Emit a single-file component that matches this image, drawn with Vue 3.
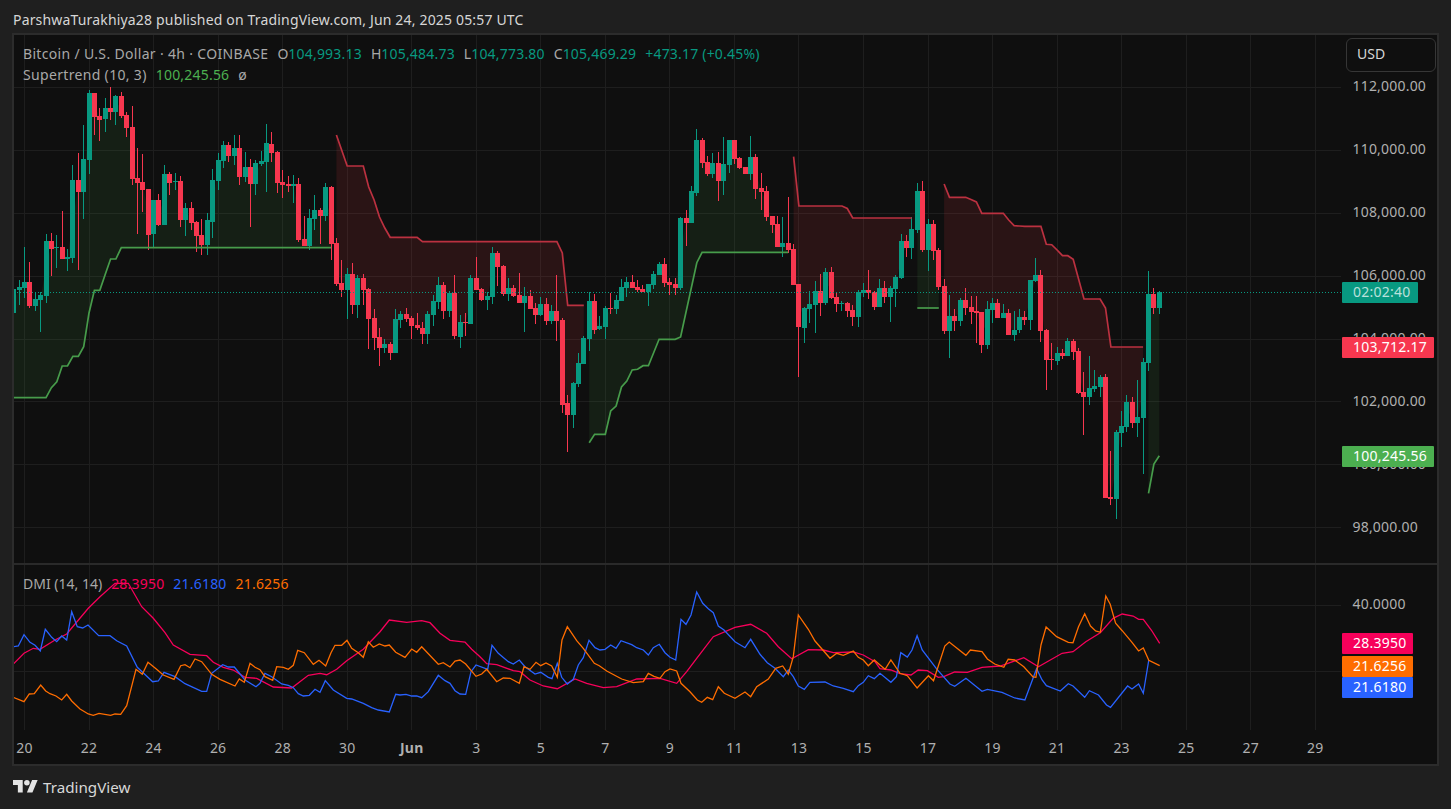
<script setup>
// chart data is kept in page pixels, as read from the picture
const BAR0_X = 13.75;
const BAR_STEP = 5.378;
const barX = (i) => BAR0_X + BAR_STEP * i;

// [bodyTop, bodyBottom, wickTop, wickBottom, up]
const candles = [
  [289,313,287,322,1],[287,290,280,305,1],[282,288,247,298,1],[282,306,262,308,0],[299,306,292,311,1],
  [295,300,292,332,1],[241,296,234,303,1],[241,249,233,276,0],[247,248,235,268,1],[247,259,211,259,0],
  [257,259,249,271,1],[180,258,165,263,1],[180,192,153,270,0],[159,192,125,219,1],[93,160,90,174,1],
  [93,117,93,135,0],[116,120,108,141,0],[108,119,98,132,1],[108,112,87,120,0],[96,112,95,125,1],
  [96,116,92,118,0],[115,128,112,137,0],[127,179,106,185,0],[178,183,148,234,0],[182,190,154,212,0],
  [189,235,189,250,0],[200,234,200,248,1],[200,225,194,226,0],[174,225,165,225,1],[174,183,172,195,0],
  [181,182,173,190,1],[181,220,176,227,0],[208,220,203,236,1],[208,223,202,230,0],[222,236,221,252,0],
  [235,245,219,255,0],[220,245,213,255,1],[180,222,169,238,1],[160,181,153,190,1],[145,161,141,168,1],
  [145,156,142,162,0],[148,156,135,165,1],[148,177,135,185,0],[167,177,152,182,1],[167,184,159,227,0],
  [163,184,160,195,1],[161,164,151,166,1],[143,162,124,192,1],[144,153,132,162,0],[152,183,151,193,0],
  [182,185,170,198,0],[184,186,176,192,0],[184,186,175,203,1],[184,240,178,242,0],[239,246,216,246,0],
  [218,246,209,250,1],[210,219,195,230,1],[210,216,208,244,0],[187,216,183,221,1],[187,244,186,260,0],
  [243,284,238,286,0],[283,290,260,297,0],[274,290,268,319,1],[274,305,263,314,0],[278,305,275,318,1],
  [278,290,274,305,0],[289,319,288,349,0],[318,338,309,350,0],[337,348,328,366,0],[344,348,339,353,1],
  [344,353,342,360,0],[319,353,309,353,1],[314,320,311,328,1],[314,319,308,322,0],[318,326,316,339,0],
  [325,328,313,330,0],[328,334,322,344,0],[314,334,311,344,1],[301,315,295,326,1],[285,302,277,309,1],
  [285,311,282,319,0],[293,311,291,317,1],[293,336,275,339,0],[322,337,315,348,1],[322,323,313,336,0],
  [278,324,275,324,1],[278,290,257,290,0],[289,300,288,301,0],[296,300,292,310,1],[253,297,247,304,1],
  [253,267,251,286,0],[266,294,265,296,0],[288,294,278,301,1],[288,296,285,297,0],[295,303,273,303,0],
  [296,303,287,332,1],[296,309,290,309,0],[308,315,303,324,0],[304,315,297,316,1],[304,321,298,325,0],
  [311,321,305,324,1],[311,321,275,341,0],[320,405,318,413,0],[403,415,395,452,0],[383,415,382,428,1],
  [363,384,353,387,1],[338,364,336,364,1],[301,339,292,351,1],[301,330,294,334,0],[326,329,316,330,1],
  [308,327,306,339,1],[308,309,293,314,0],[300,309,295,314,1],[287,301,279,301,1],[282,288,277,297,1],
  [282,288,275,288,0],[287,290,280,292,0],[289,292,285,292,0],[284,292,284,306,1],[274,285,271,289,1],
  [264,275,262,275,1],[264,283,258,287,0],[282,285,278,295,0],[284,288,278,295,0],[218,288,217,290,1],
  [218,223,210,246,0],[191,223,186,223,1],[140,193,129,196,1],[140,163,138,168,0],[162,174,156,176,0],
  [163,174,153,178,1],[163,181,152,201,0],[164,181,137,195,1],[140,165,140,173,1],[140,159,140,164,0],
  [158,168,157,169,0],[167,174,167,174,0],[157,174,136,180,1],[157,189,154,199,0],[188,192,173,210,0],
  [191,217,186,221,0],[216,225,216,233,0],[224,247,216,247,0],[243,247,217,257,1],[243,250,197,253,0],
  [249,285,244,285,0],[284,327,284,377,0],[308,328,307,343,1],[304,309,291,323,1],[291,305,281,333,1],
  [291,303,274,316,0],[272,303,268,305,1],[272,298,267,299,0],[297,304,292,312,0],[303,304,301,311,1],
  [303,311,302,317,0],[310,317,305,326,0],[292,317,290,327,1],[290,293,283,297,1],[290,293,270,299,0],
  [292,307,291,310,0],[288,307,279,307,1],[288,297,281,303,0],[288,297,286,322,1],[277,289,275,307,1],
  [241,278,234,279,1],[241,248,235,257,0],[229,248,217,259,1],[191,230,183,233,1],[191,250,181,252,0],
  [224,250,219,271,1],[224,251,220,260,0],[250,287,248,290,0],[286,331,279,334,0],[316,331,295,358,1],
  [316,321,309,331,0],[300,321,298,326,1],[300,308,288,315,0],[307,312,296,324,0],[311,313,296,343,0],
  [312,345,312,353,0],[309,345,301,349,1],[303,310,298,323,1],[303,318,299,318,0],[313,318,304,318,1],
  [313,335,309,335,0],[330,335,311,341,1],[317,330,309,333,1],[317,320,311,325,0],[280,320,280,330,1],
  [275,281,258,282,1],[275,331,270,342,0],[330,360,329,390,0],[359,360,343,370,0],[353,361,347,365,1],
  [353,356,349,359,0],[341,356,338,356,1],[341,352,339,360,0],[351,393,348,394,0],[392,397,372,435,0],
  [388,397,356,405,1],[386,389,370,392,1],[377,387,375,397,1],[377,498,374,498,0],[497,499,451,505,0],
  [432,499,430,519,1],[426,433,411,447,1],[402,427,395,432,1],[402,423,397,428,0],[417,423,380,437,1],
  [362,418,358,474,1],[294,363,271,371,1],[294,308,288,314,0],[292,308,291,314,1],
];

// supertrend segments: [bar index, y] vertices between the flips
const trends = [
  { up: true, from: 0, to: 59, line: [[0,397.7],[6,397.7],[7,387.7],[8,381.7],[9,366],[10,366],[11,356.3],[12,356.3],[13,346.7],[14,313],[15,290.3],[16,290.3],[17,274.5],[18,259],[19,259],[20,247.7],[59,247.7]] },
  { up: false, from: 60, to: 106, line: [[60,135],[62,166],[65,166],[66,187],[67,200],[68,217],[69,228],[70,237.3],[75,237.3],[76,241.7],[101,241.7],[102,253],[103,305.3],[106,305.3]] },
  { up: true, from: 107, to: 144, line: [[107,442.7],[108,434.3],[110,434.3],[111,411],[112,406],[113,387],[114,381],[115,370],[116,369.3],[117,365.7],[118,365.7],[120,339.3],[123,339.3],[124,337],[127,262.7],[128,252.3],[144,252.3]] },
  { up: false, from: 145, to: 167, line: [[145,156.7],[146,206],[154,206],[155,208.5],[156,218],[167,218]] },
  { up: true, from: 168, to: 172, line: [[168,308],[172,308]] },
  { up: false, from: 173, to: 210, line: [[173,184],[174,197.3],[177,197.3],[178,199.5],[179,202],[180,213.3],[184,213.3],[185,220],[186,225.7],[187,226],[188,226.3],[191,226.3],[192,244.3],[193,244.7],[194,250],[195,255.7],[196,255.7],[197,259.3],[199,299],[202,299],[203,308],[204,347],[210,347]] },
  { up: true, from: 211, to: 213, line: [[211,493.3],[212,464],[213,455.7]] },
];

function trendAt(line, i) {
  for (let n = 1; n < line.length; n++) {
    const [a, ya] = line[n - 1];
    const [b, yb] = line[n];
    if (i <= b) return ya + ((yb - ya) * (i - a)) / (b - a);
  }
  return line[line.length - 1][1];
}

const linePoints = (t) => t.line.map(([i, y]) => `${barX(i).toFixed(1)},${y}`).join(" ");

// band between the trend line and the middle of the candle bodies
function bandPoints(t) {
  const mid = [];
  const back = [];
  for (let i = t.from; i <= t.to; i++) {
    const c = candles[i];
    mid.push(`${barX(i).toFixed(1)},${(c[0] + c[1]) / 2}`);
    back.unshift(`${barX(i).toFixed(1)},${trendAt(t.line, i).toFixed(1)}`);
  }
  return mid.concat(back).join(" ");
}

const dayLabels = ["20","22","24","26","28","30","Jun","3","5","7","9","11","13","15","17","19","21","23","25","27","29"];
const dayTicks = dayLabels.map((label, k) => ({ label, x: barX(2 + 12 * k) }));
const priceLabels = ["112,000.00","110,000.00","108,000.00","106,000.00","104,000.00","102,000.00","100,000.00","98,000.00"];
const priceTicks = priceLabels.map((label, k) => ({ label, y: 87.3 + 62.93 * k }));
const dmiGrid = [605.3, 671.3];

const dmiLines = [
  {
    color: "#f7005a",
    points: "13.3,664 24,653.3 33.3,648.3 40,649.3 55,640 66.7,634 88.3,608.3 100,596.7 115,583.3 128.3,583.3 141.7,606.7 153.3,618.3 165,632.7 173.3,645 190,654.3 206.7,655.7 213.3,662.3 223.3,667.3 233.3,670 245,677.3 256.7,678.3 273.3,687 291.7,688 308.3,675.3 320,673.3 326.7,674.7 336.7,669.3 346.7,660.7 363.3,649.3 380,631.7 389.3,620 406.7,622.3 421.7,620.7 430,622.7 440,633.3 450,640.3 465,642 471.7,649.3 480,656.7 486.7,663.7 496.7,664.7 513.3,670.7 520,671.7 530,680 543.3,686 557.3,688.7 575,679 586.7,683.3 603.3,687.7 616.7,686.7 636.7,679 660,678.3 676.7,683.3 686.7,671.7 696.7,658.3 713.3,636.7 735,627.3 750.7,624.3 766.7,633.3 778.3,646.7 791.7,658.7 808.3,649.7 823.3,650 833.3,652.7 853.3,652 863.3,655 875,661.7 880,668.7 890.9,670 900,673.7 911,675 918.2,670 927.3,670.7 938.3,677.3 943.7,676.7 954.7,672 967.4,672.3 982,667.3 1000.2,666 1023.8,657.7 1038.4,666.7 1062.1,653.3 1073,651.7 1085.8,641.7 1100.3,632.7 1113.1,618.3 1122.2,614 1133.1,616 1138.6,619.3 1143.3,619.3 1151.3,630 1159.7,643.3",
  },
  {
    color: "#2962ff",
    points: "13.3,646.7 18.3,646 24,634.7 30,642.3 35,645.3 40.3,651 45.3,629.3 51.7,637.3 56.7,641.7 61.7,636 66.7,640 71.7,611.7 77.3,626.7 82.7,628 88,625 98.7,635.7 110,635.7 116.7,640.7 126.7,646 137.3,667.3 152.7,681.7 158.3,681 164,672.3 175,676.7 185,683.7 201.7,691.3 206.7,691.3 211.7,673.3 222.7,664.7 228.3,667 234.3,667 245,680 256,686.7 260,683.3 265,673.3 271.7,676.7 281.7,684 288.3,685.3 293.3,687.7 298.3,693.7 303.3,696 309.3,695.3 315,689.3 320,692.3 325.3,680.7 333.3,690 346.7,698.3 351.7,699 363.3,703.3 371.7,707.7 378.3,710 389.3,712 395.7,694.3 400,695 406,694.3 411.7,696 416.7,696 421.7,697.7 428.3,691.7 438.3,675.3 445,680.7 450,683.3 455,690.7 460,694 465.7,694.3 471,671.7 476,665 487.7,669.3 492,645.3 498.3,653.3 508.3,661.7 513.3,664 519.3,660 525,666.7 535,674 540.7,672.3 548.3,677.3 552,678.7 557.3,663.3 561.7,677.3 567.3,684 573.3,679.3 578.3,665 583.3,657.7 589,640.3 595,647.7 600,650 605,649.3 610.7,645 616,648.3 621,640.7 631.7,644.7 636.7,647.7 643.3,650 648.3,655 653.3,647.7 659.3,644.3 665,652.7 670,657.3 675.7,660 681,619.3 686,624.3 691,615 696.7,592 702.7,603.3 708.3,608.7 713.3,612.7 718.3,626 724,630 735,641.7 745,647.7 750.7,639.3 760,654.3 767.3,662.7 775,668.3 783.3,676.7 788.3,670 793.3,676.7 798.3,686 804.3,689.3 810,682.3 825,682 833.3,686 843.3,688.3 853.3,691.7 858.3,685.7 863.3,682.3 868.3,675.7 874.3,678.7 880,673.3 890.9,682.3 896.4,676.7 900.8,652.7 907.3,657 912,650 917.1,635.7 922.2,650 936.4,668.7 949.9,684 954.7,686.3 965.9,678.3 982,691.3 987.4,689.3 1002,692.3 1014.7,698 1024.9,700 1036.6,668.7 1042.1,680 1046.4,685.7 1060.3,691 1068.3,683.7 1073,686 1084.7,697.3 1089.4,690.7 1098.5,695 1106.5,705 1110.5,707.3 1127.6,686 1132,689 1138.6,684 1143.3,693.3 1148.8,660",
  },
  {
    color: "#ff6d00",
    points: "13.3,697.3 24,701.7 29.3,694 34.3,693.7 40.7,685 45.7,691 50,693.7 56,696 61.7,700 66.7,694.3 71.7,701 80,709 88.3,714 93.3,715.3 99,713.3 110.7,715.3 115,714 120.7,714.3 126.7,705.7 136,669.3 142.3,674.3 148,662.3 156,668.7 163.3,675 174,679.3 180.7,665.7 185,664.7 190,667.7 195,659 201.7,661.7 211.7,674.3 220,679.3 235,686 239.3,679 244.3,682.3 250,663.3 255,667.3 260,669.7 265,676.7 272.7,680.3 276.7,666.7 283.3,667.3 288.3,669.3 293.3,665.3 297.7,650.3 304.3,652.7 313.3,664.3 319,660.3 325.7,666 331,652.7 335,645.3 341.7,645.3 347,640.3 351.7,648.3 358.3,652.7 363.3,657.3 368.3,641.7 373.3,647.3 379.3,644 385,646 389.3,645 395.7,652.3 405,657.3 411.7,649 416.7,652.3 421.7,646.7 438.3,664.3 443.3,662.7 450,667 455,661 460,660 465.7,664 476,676.3 481.7,674 486.7,669.3 496.7,681.7 503.3,678 510,678.3 519.3,683.3 524,666.7 530,669.3 536,662.3 540.7,665.7 546,663 551.7,666 557.3,677.3 562,640 567.3,626.7 576.7,640.7 583.3,648.3 594.3,663.3 599.3,665.7 606.7,671 621.7,679 633.3,682.7 643.3,681.7 648.3,673.3 654,676.3 660,678.3 665,671.7 670,669 676.7,671 681,683.3 690,691.7 697.3,700 701.7,702.3 707.3,697.3 712.7,699.7 718.3,686.7 724.3,693.3 735,698.3 745,692 750.7,696.7 756.7,686.7 768.3,679 775.7,668.3 782.7,666 788.3,674.3 793.3,656.7 798.3,615 808.3,629.3 815,641 830,658.3 836.7,653.3 843.3,655.3 853.3,651 858.3,657.3 863.3,660 868.3,665.7 874.3,660 880,665 885.1,669.3 890.9,660 900,673.3 907.3,675.7 917.1,688 928.4,675.7 933.5,680.7 944.8,646 949.2,642 965.9,655.3 970.4,650 982,651.7 987.4,659 994.7,664 1003.8,667.3 1008.2,659.3 1014.7,660 1023.8,666.7 1033,677 1035.9,677.3 1041,645 1046.1,627 1056.6,636.7 1068.3,642.3 1073,642.7 1078.5,626.7 1084.7,613.7 1090.5,626 1095.6,631 1100.3,632.3 1105.8,596 1110.2,604.3 1115.6,623.3 1122.2,630.7 1132,642.3 1138.6,651 1143.3,648 1148.8,660.3 1159.7,665.7",
  },
];
const dmiBadges = [
  { label: "28.3950", color: "#f7005a", y: 633 },
  { label: "21.6256", color: "#ff6d00", y: 656 },
  { label: "21.6180", color: "#2962ff", y: 677 },
];
</script>

<template>
  <div class="page">
    <header class="byline">ParshwaTurakhiya28 published on TradingView.com, Jun 24, 2025 05:57 UTC</header>

    <div class="chart">
      <section class="pane-main">
        <svg class="plot" width="1423" height="528" viewBox="14 35 1423 528">
          <g class="grid">
            <line v-for="t in dayTicks" :key="t.label" :x1="t.x" :x2="t.x" y1="35" y2="563" />
            <line v-for="t in priceTicks" :key="t.label" x1="14" x2="1341" :y1="t.y" :y2="t.y" />
          </g>
          <template v-for="t in trends" :key="t.from">
            <polygon :points="bandPoints(t)" :class="t.up ? 'band-up' : 'band-down'" />
          </template>
          <g shape-rendering="crispEdges">
            <g v-for="(c, i) in candles" :key="i" :class="c[4] ? 'up' : 'down'">
              <rect :x="Math.round(barX(i) - 0.5)" :y="c[2]" width="1" :height="c[3] - c[2]" />
              <rect :x="Math.round(barX(i) - 2.5)" :y="c[0]" width="5" :height="c[1] - c[0]" />
            </g>
          </g>
          <polyline
            v-for="t in trends"
            :key="t.from"
            :points="linePoints(t)"
            :class="t.up ? 'trend-up' : 'trend-down'"
          />
          <line class="last-price" x1="14" x2="1341" y1="292.5" y2="292.5" />
          <text v-for="t in priceTicks" :key="t.label" class="tick" x="1352.5" :y="t.y">{{ t.label }}</text>

          <rect class="tag-teal" x="1342" y="282" width="76" height="21" rx="1" />
          <text class="tag-text tag-dim" x="1353" y="297">02:02:40</text>
          <rect class="tag-red" x="1342" y="337" width="92" height="21" rx="1" />
          <text class="tag-text" x="1353" y="352">103,712.17</text>
          <rect class="tag-green" x="1342" y="446" width="92" height="21" rx="1" />
          <text class="tag-text" x="1353" y="461">100,245.56</text>
        </svg>

        <div class="legend">
          <div class="legend-row">
            <span class="label">Bitcoin / U.S. Dollar · 4h · COINBASE</span>
            <span class="ohlc">O<b>104,993.13</b></span>
            <span class="ohlc">H<b>105,484.73</b></span>
            <span class="ohlc">L<b>104,773.80</b></span>
            <span class="ohlc">C<b>105,469.29</b></span>
            <span class="ohlc"><b>+473.17 (+0.45%)</b></span>
          </div>
          <div class="legend-row">
            <span class="label">Supertrend (10, 3)</span>
            <span class="value st-value">100,245.56</span>
            <span>ø</span>
          </div>
        </div>
        <button class="currency">USD</button>
      </section>

      <section class="pane-dmi">
        <svg class="plot" width="1423" height="165" viewBox="14 565 1423 165">
          <g class="grid">
            <line v-for="t in dayTicks" :key="t.label" :x1="t.x" :x2="t.x" y1="565" y2="730" />
            <line v-for="y in dmiGrid" :key="y" x1="14" x2="1341" :y1="y" :y2="y" />
          </g>
          <polyline
            v-for="l in dmiLines"
            :key="l.color"
            class="dmi-line"
            :points="l.points"
            :stroke="l.color"
          />
          <text class="tick" x="1352.5" y="605.7">40.0000</text>
          <template v-for="b in dmiBadges" :key="b.label">
            <rect x="1342" :y="b.y" width="71" height="21" rx="1" :fill="b.color" />
            <text class="tag-text" x="1353" :y="b.y + 15">{{ b.label }}</text>
          </template>
        </svg>
        <div class="legend">
          <div class="legend-row">
            <span>DMI (14, 14)</span>
            <span class="value dmi-pos">28.3950</span>
            <span class="value dmi-neg">21.6180</span>
            <span class="value dmi-adx">21.6256</span>
          </div>
        </div>
      </section>

      <div class="time-axis">
        <svg width="1423" height="34" viewBox="14 730 1423 34">
          <text
            v-for="t in dayTicks"
            :key="t.label"
            class="tick day"
            :class="{ month: t.label === 'Jun' }"
            :x="t.x"
            y="753"
          >{{ t.label }}</text>
        </svg>
      </div>
    </div>

    <footer class="brand">
      <svg class="brand-mark" width="25" height="20" viewBox="0 0 36 28">
        <path d="M14 22H7V11H0V4h14v18zM28 22h-8l7.5-18h8L28 22z" />
        <circle cx="20" cy="8" r="4" />
      </svg>
      <span>TradingView</span>
    </footer>
  </div>
</template>

<style>
html,
body {
  background: #1f1f1f;
}
</style>

<style scoped>
.page {
  width: 1451px;
  height: 809px;
  display: flex;
  flex-direction: column;
  background: #1f1f1f;
  font-family: "Noto Sans", "Open Sans", sans-serif;
  overflow: hidden;
}

.byline {
  height: 33px;
  padding: 11px 0 0 13px;
  box-sizing: border-box;
  color: #d6d6d6;
  font-size: 14px;
  letter-spacing: 0.17px;
  line-height: 18px;
  white-space: nowrap;
}

.chart {
  width: 1427px;
  height: 733px;
  margin-left: 12px;
  box-sizing: border-box;
  border: 2px solid #2c2c2c;
  background: #0f0f0f;
  display: flex;
  flex-direction: column;
}

.pane-main {
  position: relative;
  height: 528px;
  flex: none;
}

.pane-dmi {
  position: relative;
  height: 167px;
  flex: none;
  border-top: 2px solid #2a2a2a;
  box-sizing: border-box;
}

.time-axis {
  height: 34px;
  flex: none;
}

svg {
  display: block;
}

.grid line {
  stroke: #1e1e1e;
  stroke-width: 1;
  shape-rendering: crispEdges;
}

.band-up {
  fill: rgba(76, 175, 80, 0.1);
}

.band-down {
  fill: rgba(242, 54, 69, 0.12);
}

.up rect {
  fill: #089981;
}

.down rect {
  fill: #f7374f;
}

.trend-up,
.trend-down {
  fill: none;
  stroke-width: 1.7;
}

.trend-up {
  stroke: #479c4b;
}

.trend-down {
  stroke: #bb3140;
}

.last-price {
  stroke: #089981;
  stroke-width: 1;
  stroke-dasharray: 1 2;
  shape-rendering: crispEdges;
}

.tick {
  fill: #b0b0b0;
  font-size: 14px;
  letter-spacing: 0.2px;
  dominant-baseline: middle;
}

.day {
  text-anchor: middle;
  dominant-baseline: auto;
}

.month {
  font-weight: 700;
}

.tag-teal {
  fill: #089981;
}

.tag-red {
  fill: #f7374f;
}

.tag-green {
  fill: #4caf50;
}

.tag-text {
  fill: #fff;
  font-size: 14px;
  letter-spacing: 0.25px;
}

.tag-dim {
  fill: rgba(255, 255, 255, 0.72);
}

.dmi-line {
  fill: none;
  stroke-width: 1.3;
}

.legend {
  position: absolute;
  top: 10px;
  left: 9px;
  display: flex;
  flex-direction: column;
  gap: 3px;
  color: #a8a8a8;
  font-size: 14px;
  line-height: 18px;
  white-space: nowrap;
}

.legend-row {
  display: flex;
  gap: 9px;
}

.label {
  letter-spacing: 0.33px;
}

.ohlc b {
  font-weight: 400;
  letter-spacing: 0.2px;
  color: #089981;
}

.value {
  letter-spacing: 0.2px;
}

.st-value {
  color: #4caf50;
}

.dmi-pos {
  color: #f7005a;
}

.dmi-neg {
  color: #2962ff;
}

.dmi-adx {
  color: #ff6d00;
}

.currency {
  position: absolute;
  top: 3px;
  left: 1332px;
  width: 90px;
  height: 34px;
  padding: 0 0 3px 10px;
  box-sizing: border-box;
  border: 1px solid #363636;
  border-radius: 6px;
  background: #0f0f0f;
  color: #d6d6d6;
  font: 14px "Noto Sans", "Open Sans", sans-serif;
  text-align: left;
}

.brand {
  flex: 1;
  display: flex;
  align-items: center;
  gap: 5px;
  padding-left: 13px;
  color: #d8d8d8;
  font-size: 15.2px;
  padding-bottom: 2px;
}

.brand-mark {
  fill: #e4e4e4;
}
</style>
